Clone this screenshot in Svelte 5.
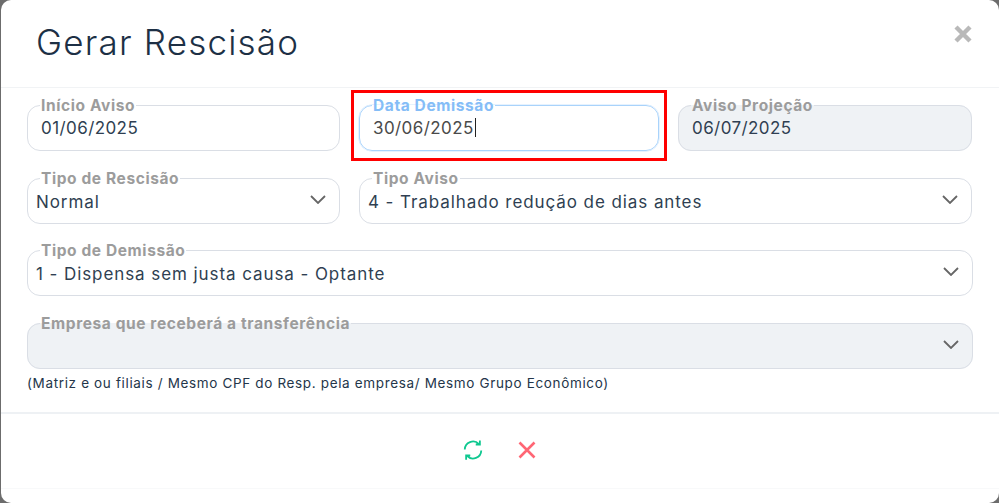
<script>
  const chevron = "M1 1l7 7 7-7";
</script>

<div class="modal">
  <header class="head">
    <h1>Gerar Rescisão</h1>
    <button class="close" aria-label="Fechar">
      <svg width="20" height="20" viewBox="0 0 20 20"><path d="M3 3l14 14M17 3L3 17" /></svg>
    </button>
  </header>

  <div class="body">
    <div class="row r3">
      <fieldset class="field"><legend>Início Aviso</legend><div class="value">01/06/2025</div></fieldset>
      <div class="focus-wrap">
        <fieldset class="field focus"><legend>Data Demissão</legend><div class="value">30/06/2025<span class="caret"></span></div></fieldset>
        <div class="marker"></div>
      </div>
      <fieldset class="field off"><legend>Aviso Projeção</legend><div class="value">06/07/2025</div></fieldset>
    </div>

    <div class="row r2">
      <fieldset class="field select"><legend>Tipo de Rescisão</legend>
        <div class="value">Normal</div>
        <svg class="chev" width="16" height="9" viewBox="0 0 16 9"><path d={chevron} /></svg>
      </fieldset>
      <fieldset class="field select"><legend>Tipo Aviso</legend>
        <div class="value">4 - Trabalhado redução de dias antes</div>
        <svg class="chev" width="16" height="9" viewBox="0 0 16 9"><path d={chevron} /></svg>
      </fieldset>
    </div>

    <fieldset class="field select dem"><legend>Tipo de Demissão</legend>
      <div class="value">1 - Dispensa sem justa causa - Optante</div>
      <svg class="chev" width="16" height="9" viewBox="0 0 16 9"><path d={chevron} /></svg>
    </fieldset>

    <div class="last">
      <fieldset class="field select off"><legend>Empresa que receberá a transferência</legend>
        <div class="value"></div>
        <svg class="chev" width="16" height="9" viewBox="0 0 16 9"><path d={chevron} /></svg>
      </fieldset>
      <p class="hint">(Matriz e ou filiais / Mesmo CPF do Resp. pela empresa/ Mesmo Grupo Econômico)</p>
    </div>
  </div>

  <footer class="foot">
    <button aria-label="Salvar">
      <svg class="sync" width="22" height="22" viewBox="0 0 24 24">
        <path d="M3 11.500A9 9 0 0 1 18.500 5.500M19.500 1.500V6H15" />
        <path d="M21 12.500A9 9 0 0 1 5.500 18.500M4.500 22.500V18H9" />
      </svg>
    </button>
    <button aria-label="Cancelar">
      <svg class="cancel" width="20" height="20" viewBox="0 0 20 20"><path d="M2.500 2.500l15 15M17.500 2.500l-15 15" /></svg>
    </button>
  </footer>
</div>

<style>
  :global(body) {
    margin: 0;
    background: #6c6c6c;
  }

  .modal {
    box-sizing: border-box;
    width: 998px;
    height: 503px;
    margin-left: 1px;
    background: #fff;
    border-radius: 10px;
    font-family: Inter, "Open Sans", sans-serif;
    color: #2f3f52;
    overflow: hidden;
  }

  .head {
    height: 88px;
    box-sizing: border-box;
    border-bottom: 1px solid #f1f3f5;
    padding: 0 25px 0 35px;
    display: flex;
    justify-content: space-between;
    align-items: flex-start;
  }

  h1 {
    margin: 20px 0 0;
    font-size: 35px;
    line-height: 44px;
    font-weight: 300;
    letter-spacing: 1.2px;
    color: #1d3045;
  }

  button {
    border: 0;
    background: none;
    padding: 0;
    display: flex;
  }

  .close {
    margin-top: 24px;
    margin-right: 1px;
  }

  .close path {
    fill: none;
    stroke: #b9b9b9;
    stroke-width: 4.4;
  }

  .body {
    padding: 6px 26px 0;
    display: flex;
    flex-direction: column;
    gap: 16px;
  }

  .row {
    display: grid;
    column-gap: 19px;
  }

  .r3 {
    grid-template-columns: 313px 300px 294px;
  }

  .r2 {
    grid-template-columns: 313px 613px;
  }

  .field {
    box-sizing: border-box;
    position: relative;
    height: 57px;
    margin: 0;
    min-width: 0;
    padding: 0 13px;
    border: 1px solid #dadee5;
    border-radius: 13px;
    background: #fff;
  }

  .field.dem {
    margin-top: -1px;
  }

  legend {
    padding: 2px 1px 0;
    margin-left: -1px;
    font-size: 15.5px;
    line-height: 20px;
    font-weight: 700;
    letter-spacing: 0.6px;
    color: #9c9c9c;
    white-space: nowrap;
  }

  .value {
    height: 26px;
    padding-top: 1px;
    font-size: 17px;
    line-height: 22px;
    letter-spacing: 0.42px;
    color: #2f3f52;
    white-space: nowrap;
  }

  .select {
    padding-left: 8px;
  }

  .select legend {
    margin-left: 4px;
  }

  .select .value {
    padding-top: 2px;
    letter-spacing: 0.92px;
  }

  .chev {
    position: absolute;
    right: 13px;
    top: 6px;
  }

  .chev path {
    fill: none;
    stroke: #666;
    stroke-width: 1.8;
  }

  .off {
    background: #eff2f5;
  }

  .focus-wrap {
    position: relative;
  }

  .focus {
    border-color: #a9d3fb;
    box-shadow: 0 0 0 0.5px #cde5fd;
  }

  .focus legend {
    color: #85bdf7;
  }

  .focus .value {
    color: #4a4a4a;
  }

  .caret {
    display: inline-block;
    height: 19px;
    margin-left: 1px;
    vertical-align: -3px;
    border-left: 1px solid #222;
  }

  .marker {
    position: absolute;
    left: -8px;
    right: -8px;
    top: -4px;
    bottom: -10px;
    border: 3px solid #f00;
    box-sizing: border-box;
    pointer-events: none;
  }

  .hint {
    margin: 5px 0 0;
    font-size: 13.5px;
    line-height: 18px;
    letter-spacing: 0.65px;
    color: #24364a;
  }

  .foot {
    position: absolute;
    left: 1px;
    top: 412px;
    width: 998px;
    height: 77px;
    box-sizing: border-box;
    border-top: 2px solid #eef1f4;
    border-bottom: 1px solid #f8f9fa;
    display: flex;
    justify-content: center;
    align-items: center;
    gap: 33px;
    padding: 0 2px 3px 0;
  }

  .sync path {
    fill: none;
    stroke: #0fc890;
    stroke-width: 2;
  }

  .cancel path {
    fill: none;
    stroke: #ff6674;
    stroke-width: 2.6;
  }
</style>
